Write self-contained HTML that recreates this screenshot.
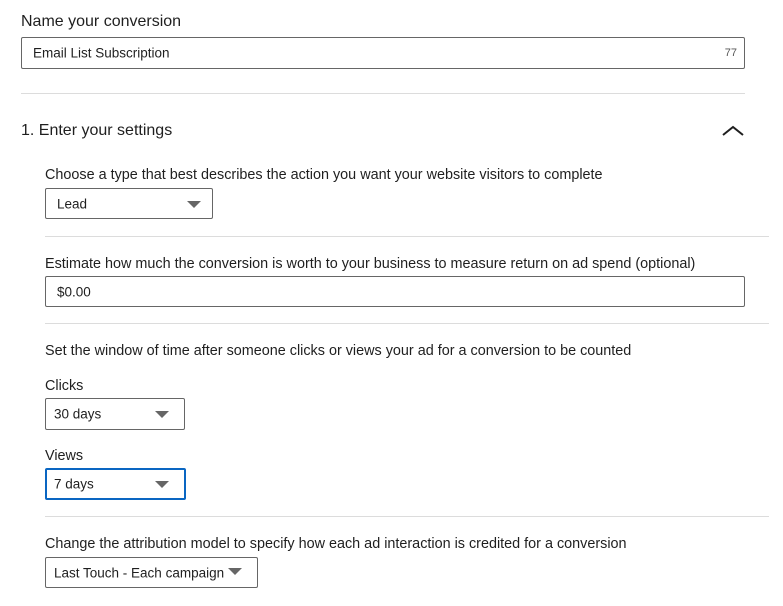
<!DOCTYPE html>
<html><head><meta charset="utf-8"><style>
body{margin:0;width:783px;height:606px;background:#fff;font-family:"Liberation Sans",Arial,sans-serif;color:#1f1f1f;position:relative;overflow:hidden}
.a{position:absolute;white-space:nowrap}
.h{font-size:16px}
.t{font-size:14.4px}
.box{position:absolute;box-sizing:border-box;border:1px solid #666;border-radius:2px;font-size:13.5px}
.box span{position:absolute;left:11px;top:50%;transform:translateY(-50%)}
.tri{position:absolute;width:0;height:0;border-left:7px solid transparent;border-right:7px solid transparent;border-top:7px solid #666;top:50%;margin-top:-3px}
.hr{position:absolute;height:1px;background:#dcdcdc}
</style></head><body>
<div class="a h" style="left:21px;top:13px">Name your conversion</div>
<div class="box" style="left:21px;top:37px;width:724px;height:32px"><span>Email List Subscription</span><span style="left:auto;right:7px;font-size:11px;color:#555">77</span></div>
<div class="hr" style="left:21px;top:93px;width:724px"></div>
<div class="a h" style="left:21px;top:122px">1. Enter your settings</div>
<svg class="a" style="left:722px;top:125px" width="22" height="12"><path d="M1 10 L11 2 L21 10" fill="none" stroke="#1f1f1f" stroke-width="2"/></svg>
<div class="a t" style="left:45px;top:167px">Choose a type that best describes the action you want your website visitors to complete</div>
<div class="box" style="left:45px;top:188px;width:168px;height:31px"><span>Lead</span><div class="tri" style="left:141px"></div></div>
<div class="hr" style="left:45px;top:236px;width:724px"></div>
<div class="a t" style="left:45px;top:256px">Estimate how much the conversion is worth to your business to measure return on ad spend (optional)</div>
<div class="box" style="left:45px;top:276px;width:700px;height:31px"><span>$0.00</span></div>
<div class="hr" style="left:45px;top:323px;width:724px"></div>
<div class="a t" style="left:45px;top:343px">Set the window of time after someone clicks or views your ad for a conversion to be counted</div>
<div class="a t" style="left:45px;top:378px">Clicks</div>
<div class="box" style="left:45px;top:398px;width:140px;height:32px"><span style="left:8px">30 days</span><div class="tri" style="left:109px"></div></div>
<div class="a t" style="left:45px;top:448px">Views</div>
<div class="box" style="left:45px;top:468px;width:141px;height:32px;border:2px solid #0a66c2"><span style="left:7px">7 days</span><div class="tri" style="left:108px"></div></div>
<div class="hr" style="left:45px;top:516px;width:724px"></div>
<div class="a t" style="left:45px;top:536px">Change the attribution model to specify how each ad interaction is credited for a conversion</div>
<div class="box" style="left:45px;top:557px;width:213px;height:31px"><span style="left:8px">Last Touch - Each campaign</span><div class="tri" style="left:182px;margin-top:-5px"></div></div>
</body></html>
